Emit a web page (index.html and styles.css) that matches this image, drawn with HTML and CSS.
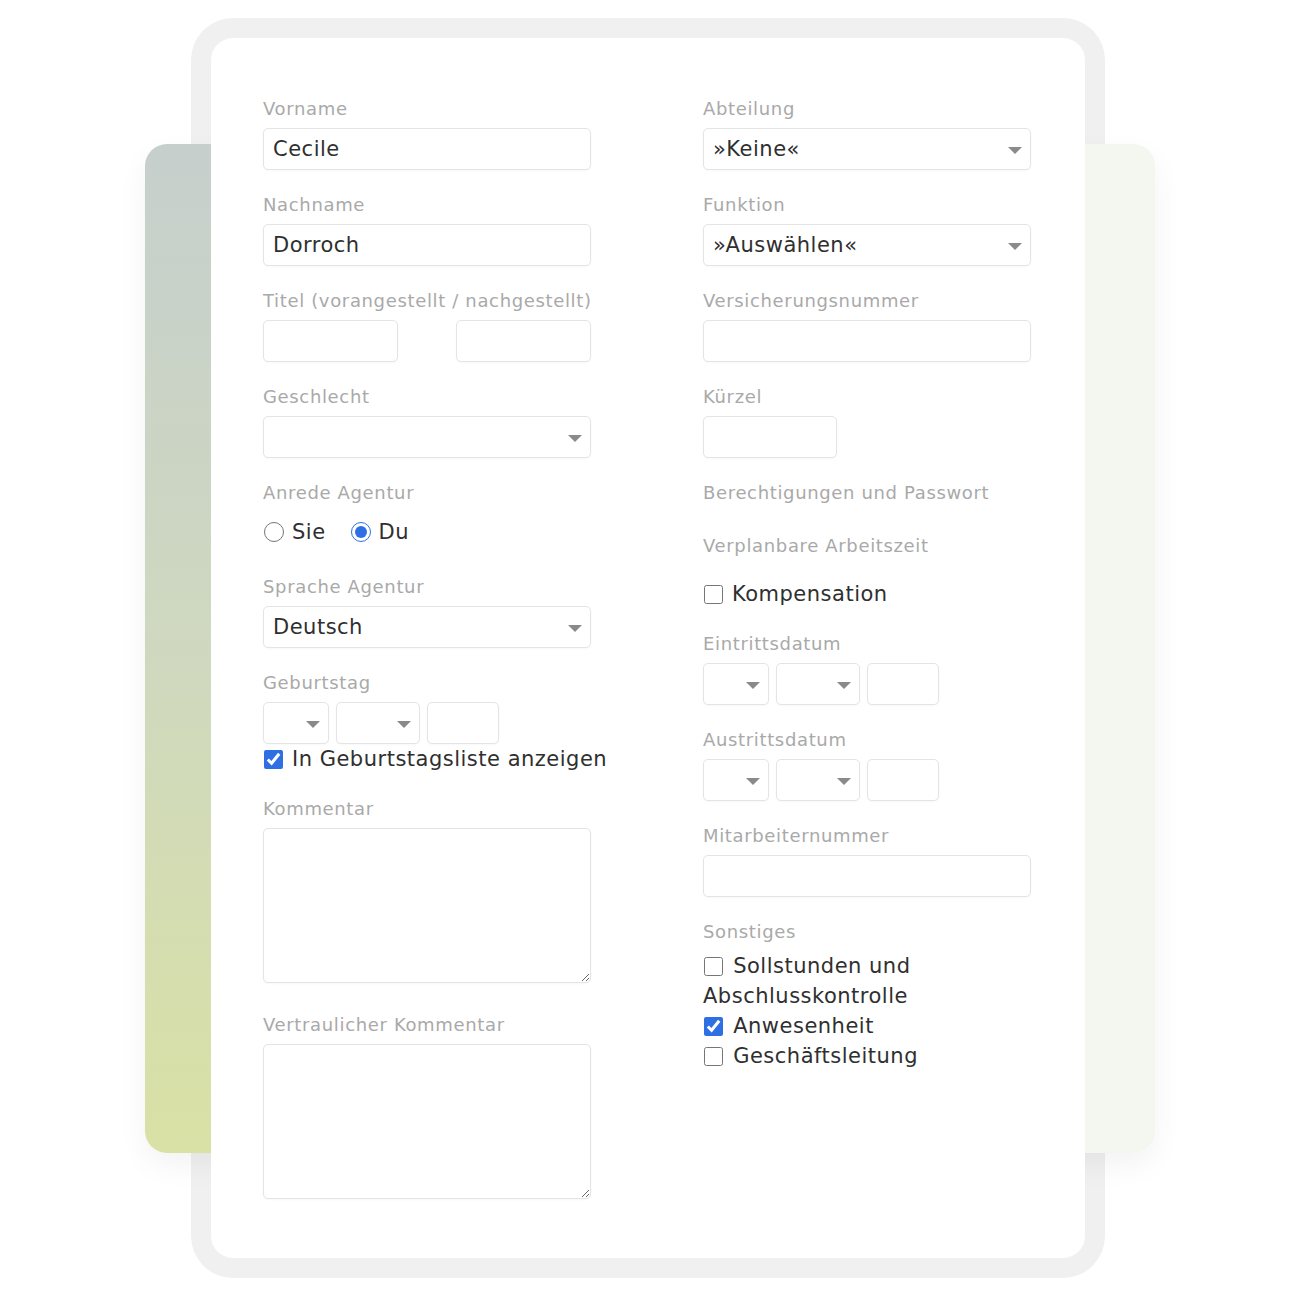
FILE: index.html
```html
<!DOCTYPE html>
<html lang="de">
<head>
  <meta charset="UTF-8">
  <meta name="viewport" content="width=device-width, initial-scale=1.0">
  <title>Mitarbeiter bearbeiten</title>
  <link rel="stylesheet" href="styles.css">
</head>
<body>
  <div class="stage">
    <div class="frame"></div>
    <div class="backdrop"></div>

    <form class="sheet">
      <!-- linke Spalte -->
      <div class="col">
        <div class="field">
          <label class="label">Vorname</label>
          <input class="control" type="text" value="Cecile">
        </div>
        <div class="field">
          <label class="label">Nachname</label>
          <input class="control" type="text" value="Dorroch">
        </div>
        <div class="field">
          <label class="label">Titel (vorangestellt / nachgestellt)</label>
          <div class="pair">
            <input class="control" type="text">
            <input class="control" type="text">
          </div>
        </div>
        <div class="field">
          <label class="label">Geschlecht</label>
          <div class="select"><span></span></div>
        </div>
        <div class="field field-choice">
          <label class="label">Anrede Agentur</label>
          <div class="radios">
            <label class="radio"><input type="radio" name="anrede"> Sie</label>
            <label class="radio"><input type="radio" name="anrede" checked> Du</label>
          </div>
        </div>
        <div class="field">
          <label class="label">Sprache Agentur</label>
          <div class="select"><span>Deutsch</span></div>
        </div>
        <div class="field">
          <label class="label">Geburtstag</label>
          <div class="date">
            <div class="select day"><span></span></div>
            <div class="select month"><span></span></div>
            <input class="control year" type="text">
          </div>
          <label class="check"><input type="checkbox" checked> In Geburtstagsliste anzeigen</label>
        </div>
        <div class="field field-text">
          <label class="label">Kommentar</label>
          <textarea class="control area"></textarea>
        </div>
        <div class="field">
          <label class="label">Vertraulicher Kommentar</label>
          <textarea class="control area"></textarea>
        </div>
      </div>

      <!-- rechte Spalte -->
      <div class="col">
        <div class="field">
          <label class="label">Abteilung</label>
          <div class="select"><span>»Keine«</span></div>
        </div>
        <div class="field">
          <label class="label">Funktion</label>
          <div class="select"><span>»Auswählen«</span></div>
        </div>
        <div class="field">
          <label class="label">Versicherungsnummer</label>
          <input class="control" type="text">
        </div>
        <div class="field">
          <label class="label">Kürzel</label>
          <input class="control short" type="text">
        </div>
        <div class="link">Berechtigungen und Passwort</div>
        <div class="field field-head">
          <label class="label">Verplanbare Arbeitszeit</label>
        </div>
        <div class="field">
          <label class="check"><input type="checkbox"> Kompensation</label>
        </div>
        <div class="field">
          <label class="label">Eintrittsdatum</label>
          <div class="date">
            <div class="select day"><span></span></div>
            <div class="select month"><span></span></div>
            <input class="control year" type="text">
          </div>
        </div>
        <div class="field">
          <label class="label">Austrittsdatum</label>
          <div class="date">
            <div class="select day"><span></span></div>
            <div class="select month"><span></span></div>
            <input class="control year" type="text">
          </div>
        </div>
        <div class="field">
          <label class="label">Mitarbeiternummer</label>
          <input class="control" type="text">
        </div>
        <div class="field">
          <label class="label">Sonstiges</label>
          <div class="checks">
            <label class="check"><input type="checkbox"> Sollstunden und Abschlusskontrolle</label>
            <label class="check"><input type="checkbox" checked> Anwesenheit</label>
            <label class="check"><input type="checkbox"> Geschäftsleitung</label>
          </div>
        </div>
      </div>
    </form>
  </div>
</body>
</html>
```

FILE: styles.css
```css
* {
  box-sizing: border-box;
  margin: 0;
  padding: 0;
}

body {
  background: #fff;
  font-family: 'DejaVu Sans', 'Noto Sans', sans-serif;
  color: #2f2f2f;
}

.stage {
  display: grid;
  width: 1296px;
  height: 1296px;
}

/* drei Ebenen übereinander: grauer Rahmen, farbige Fläche, weißes Blatt */
.frame,
.backdrop,
.sheet {
  grid-area: 1 / 1;
}

.frame {
  margin: 18px 0 0 191px;
  width: 914px;
  height: 1260px;
  border-radius: 42px;
  background: #f0f0f0;
}

.backdrop {
  margin: 144px 0 0 145px;
  width: 1010px;
  height: 1009px;
  border-radius: 22px;
  background:
    linear-gradient(90deg, rgba(245,248,243,0) 0%, rgba(245,248,243,0) 6%, #f4f7f1 40%, #f3f7f0 100%),
    linear-gradient(180deg, #c6cfcc 0%, #cfd8bf 50%, #d9e1a5 100%);
  box-shadow: 0 12px 30px rgba(0,0,0,0.05);
}

.sheet {
  margin: 38px 0 0 211px;
  width: 874px;
  height: 1220px;
  display: grid;
  grid-template-columns: 328px 328px;
  column-gap: 112px;
  align-content: start;
  padding: 58px 52px 0;
  border-radius: 22px;
  background: #fff;
}

.col {
  display: flex;
  flex-direction: column;
}

.field {
  margin-bottom: 22px;
}

.field-choice {
  margin-bottom: 26px;
}

.field-text {
  margin-bottom: 29px;
}

.field-head {
  margin-bottom: 14px;
}

.label,
.link {
  display: block;
  height: 24px;
  padding-top: 1px;
  margin-bottom: 8px;
  font-size: 18px;
  line-height: 24px;
  color: #a9a9a9;
  letter-spacing: 0.65px;
  white-space: nowrap;
}

.link {
  margin-bottom: 29px;
}

.control,
.select {
  display: block;
  width: 100%;
  height: 42px;
  padding: 0 9px;
  border: 1px solid #e4e4e4;
  border-radius: 5px;
  background: #fff;
  font-family: inherit;
  font-size: 21px;
  letter-spacing: 0.5px;
  color: #2f2f2f;
  outline: none;
  box-shadow: 0 1px 2px rgba(0,0,0,0.03);
}

.control.short {
  width: 134px;
}

.select {
  position: relative;
  display: flex;
  align-items: center;
}

.select::after {
  content: '';
  position: absolute;
  right: 8px;
  top: 18px;
  border-left: 7px solid transparent;
  border-right: 7px solid transparent;
  border-top: 7px solid #8a8a8a;
}

.pair {
  display: flex;
  justify-content: space-between;
}

.pair .control {
  width: 135px;
}

.date {
  display: flex;
  gap: 7px;
}

.date .day {
  width: 66px;
}

.date .month {
  width: 84px;
}

.date .year {
  width: 72px;
}

.radios {
  display: flex;
  gap: 24px;
  height: 32px;
  margin-top: 12px;
  align-items: center;
}

.radio,
.check {
  display: flex;
  align-items: center;
  font-size: 21px;
  color: #2f2f2f;
  line-height: 30px;
  letter-spacing: 0.5px;
  white-space: nowrap;
}

.radio input {
  width: 20px;
  height: 20px;
  margin: 0 8px 0 1px;
  accent-color: #2f6fe4;
}

.check input {
  width: 19px;
  height: 19px;
  margin: 0 9px 0 1px;
  accent-color: #2f6fe4;
  flex-shrink: 0;
}

.checks .check {
  display: block;
  white-space: normal;
}

.checks .check input {
  margin-right: 3px;
  vertical-align: -3px;
}

.area {
  height: 155px;
  resize: vertical;
}
```
